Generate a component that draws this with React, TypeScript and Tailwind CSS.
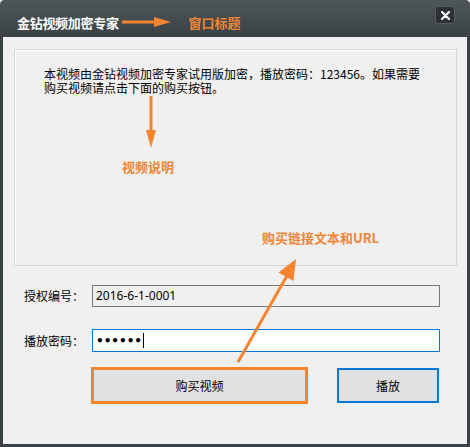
import React from 'react';

const FONT = { fontFamily: '"Noto Sans CJK SC", "Noto Sans", sans-serif' };

const TitleArrow = () => (
  <svg width="49" height="12" viewBox="0 0 49 12" className="ml-[3px]">
    <line x1="0" y1="6" x2="34" y2="6" stroke="#f4842f" strokeWidth="3" />
    <polygon points="32,1 49,6 32,11" fill="#f4842f" />
  </svg>
);

const DownArrow = () => (
  <svg width="10" height="52" viewBox="0 0 10 52">
    <line x1="5" y1="0" x2="5" y2="36" stroke="#f4842f" strokeWidth="3" />
    <polygon points="0,34 10,34 5,52" fill="#f4842f" />
  </svg>
);

export default function App() {
  return (
    <div className="relative w-[470px] h-[447px] bg-[#f0f0f0]" style={FONT}>
      <div className="flex flex-col w-full h-full rounded-t-[5px] bg-[#3a4144]">
        {/* title bar */}
        <div className="flex items-center h-[37px] pt-[7px] pl-[17px] pr-[15px] rounded-t-[5px] bg-gradient-to-b from-[#4e5659] to-[#3b4245]">
          <span className="text-[13px] font-bold text-white leading-none tracking-[-0.3px]">金钻视频加密专家</span>
          <TitleArrow />
          <span className="ml-[18px] text-[13px] font-bold text-[#ef8636] leading-none">窗口标题</span>
          <button className="ml-auto self-start mt-[-1px] w-[20px] h-[18px] rounded-[3px] bg-[#2c3134] border border-[#555c5f] flex items-center justify-center">
            <svg width="9" height="9" viewBox="0 0 9 9">
              <path d="M1 1 L8 8 M8 1 L1 8" stroke="#fff" strokeWidth="2.2" strokeLinecap="round" />
            </svg>
          </button>
        </div>

        {/* body */}
        <div className="flex-1 mx-[3px] mb-[3px] bg-[#f0f0f0] flex flex-col">
          <div className="mt-[12px] ml-[11px] w-[443px] h-[217px] border border-[#d5d5d5] shadow-[inset_1px_1px_0_#fff] flex flex-col">
            <div className="pt-[17px] pl-[29px] text-[12px] leading-[14px] text-black">
              <div className="h-[14px]">本视频由金钻视频加密专家试用版加密，播放密码：123456。如果需要</div>
              <div className="h-[14px]">购买视频请点击下面的购买按钮。</div>
            </div>
            <div className="ml-[131px] mt-[1px]">
              <DownArrow />
            </div>
            <div className="ml-[107px] mt-[10px] text-[13px] leading-[18px] font-bold text-[#ef8636]">视频说明</div>
            <div className="ml-[247px] mt-[53px] text-[13px] leading-[18px] font-bold text-[#ef8636]">购买链接文本和URL</div>
          </div>

          {/* form */}
          <div className="mt-[19px] flex items-center">
            <span className="w-[89px] pr-[8px] text-right text-[12px] text-black">授权编号：</span>
            <div className="w-[348px] h-[22px] border border-[#7a7a7a] bg-[#f0f0f0] flex items-center pl-[3px] text-[12px] text-black" style={{ fontFamily: '"Noto Sans", sans-serif' }}>
              2016-6-1-0001
            </div>
          </div>
          <div className="mt-[22px] flex items-center">
            <span className="w-[89px] pr-[8px] text-right text-[12px] text-black">播放密码：</span>
            <div className="w-[348px] h-[23px] border border-[#0078d7] bg-white flex items-center pl-[3px] text-[12px] text-black">
              <span className="font-bold" style={{ fontFamily: '"DejaVu Sans", sans-serif' }}>••••••</span>
              <span className="ml-[1px] w-[1px] h-[15px] bg-black" />
            </div>
          </div>
          <div className="mt-[15px] flex items-center pl-[88px]">
            <button className="w-[217px] h-[37px] border-[3px] border-[#f4852f] bg-[#e1e1e1] text-[12px] text-black">
              购买视频
            </button>
            <button className="ml-[29px] w-[102px] h-[35px] border-2 border-[#0078d7] bg-[#e1e1e1] text-[12px] text-black">
              播放
            </button>
          </div>
        </div>
      </div>

      {/* annotation arrow over the form */}
      <svg className="absolute left-0 top-0 pointer-events-none" width="470" height="447" viewBox="0 0 470 447">
        <line x1="238" y1="362" x2="288" y2="274" stroke="#f4842f" strokeWidth="3" />
        <polygon points="296,259 293.5,281 278.5,272.5" fill="#f4842f" />
      </svg>
    </div>
  );
}
